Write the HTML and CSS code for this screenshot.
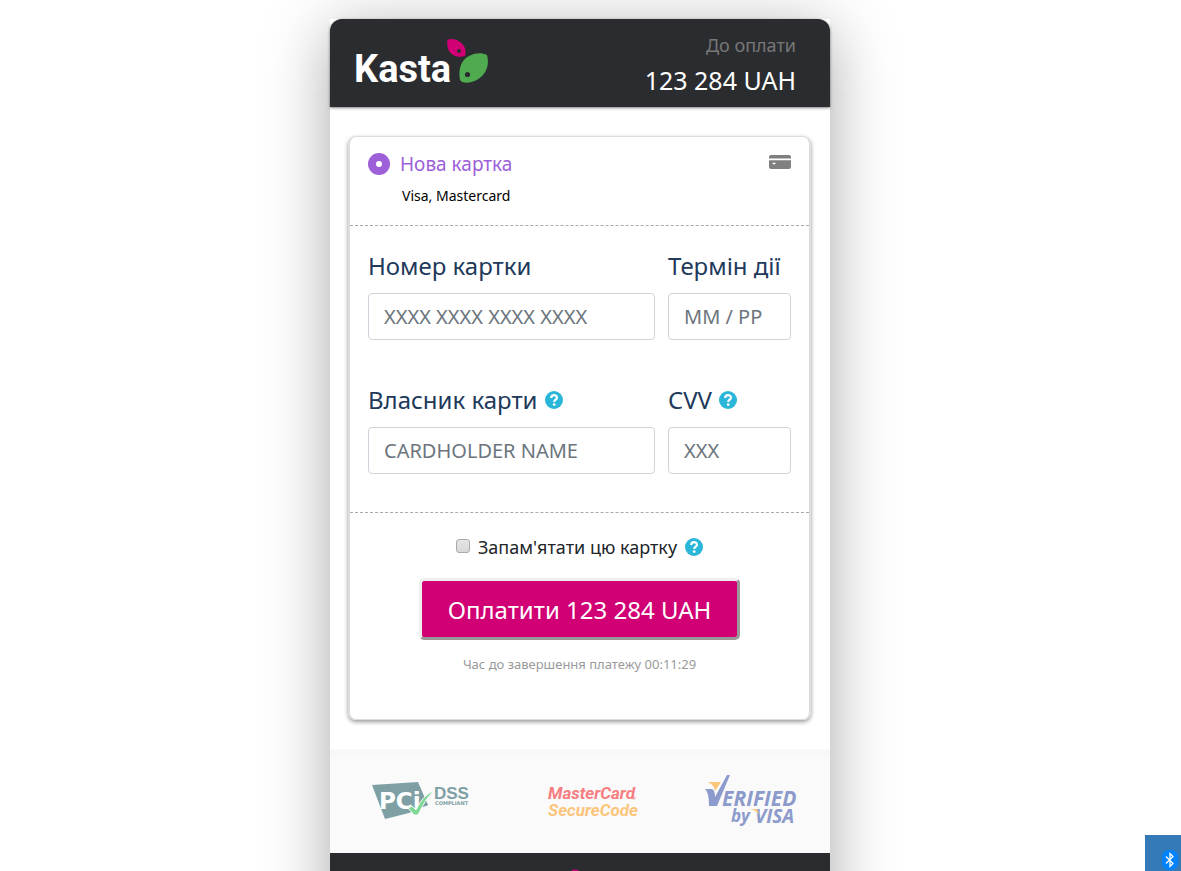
FILE: index.html
```html
<!DOCTYPE html>
<html lang="uk">
<head>
<meta charset="utf-8">
<meta name="viewport" content="width=device-width, initial-scale=1">
<title>Kasta</title>
<link rel="stylesheet" href="styles.css">
</head>
<body>
<main class="checkout">
  <header class="topbar">
    <svg class="logo" viewBox="0 0 134 46" width="134" height="46" role="img" aria-label="Kasta">
      <text class="logo-text" x="-2" y="44">Kasta</text>
      <path fill="#d10074" d="M91.500 1.500C98-.500 106 3 109 10C110 13 109.500 16 109 18C103 20 96 18 93 13C91 9 91 4 91.500 1.500Z"/>
      <circle cx="103" cy="13" r="2" fill="#2b2c30"/>
      <path fill="#50ab50" d="M104 42C102 31 105 22 113 18C118 15 125 14 131 17C133 24 132 32 126 38C120 44 112 46 106 44Z"/>
      <circle cx="111.500" cy="36.500" r="2.600" fill="#2b2c30"/>
    </svg>
    <div class="due">
      <span class="due-label">До оплати</span>
      <span class="due-sum">123 284 UAH</span>
    </div>
  </header>

  <form class="card">
    <div class="method">
      <label class="method-choice"><input class="radio" type="radio" name="method" checked><span>Нова картка</span></label>
      <svg class="card-icon" viewBox="0 0 22 14" width="22" height="14" aria-hidden="true">
        <rect width="22" height="14" rx="2" fill="#808080"/><path fill="#fff" d="M0 3.500h22v1.700H0zM3 8.500l2-1 2 1-2 1z"/>
      </svg>
      <p class="brands">Visa, Mastercard</p>
    </div>

    <div class="fields">
      <div class="field">
        <label class="label" for="number">Номер картки</label>
        <input class="input" id="number" type="text" placeholder="XXXX XXXX XXXX XXXX">
      </div>
      <div class="field">
        <label class="label" for="expiry">Термін дії</label>
        <input class="input" id="expiry" type="text" placeholder="MM / РР">
      </div>
      <div class="field">
        <div class="label-row"><label class="label" for="holder">Власник карти</label>
          <svg class="help" viewBox="0 0 18 18" width="18" height="18"><use href="#help"/></svg></div>
        <input class="input" id="holder" type="text" placeholder="CARDHOLDER NAME">
      </div>
      <div class="field">
        <div class="label-row"><label class="label" for="cvv">CVV</label>
          <svg class="help" viewBox="0 0 18 18" width="18" height="18"><use href="#help"/></svg></div>
        <input class="input" id="cvv" type="text" placeholder="XXX">
      </div>
    </div>

    <div class="submit">
      <div class="remember">
        <input class="check" id="remember" type="checkbox"><label for="remember">Запам'ятати цю картку</label>
        <svg class="help" viewBox="0 0 18 18" width="18" height="18">
          <g id="help"><circle cx="9" cy="9" r="9" fill="#29b6d8"/><path d="M6.200 7C6.200 3.200 12 3.300 12 6.700C12 8.800 9.200 8.700 9.200 11" fill="none" stroke="#fff" stroke-width="2.200"/><circle cx="9.200" cy="13.600" r="1.400" fill="#fff"/></g>
        </svg>
      </div>
      <button class="pay" type="button">Оплатити 123 284 UAH</button>
      <p class="timer">Час до завершення платежу 00:11:29</p>
    </div>
  </form>

  <section class="badges">
    <svg viewBox="0 0 98 38" width="98" height="38" role="img" aria-label="PCI DSS Compliant">
      <path fill="#7ea0a4" d="M0 3L46 0L56 23L37 31L13 37Z"/>
      <text class="pci" x="7" y="27">PCi</text>
      <path fill="#7ea0a4" d="M53 23l3-1-1 2z"/>
      <path fill="#7fd894" stroke="#fafafa" stroke-width="1" d="M36 26L40 24L44 28C48 20 53 12 62 9C55 15 51 23 46 33H42Z"/>
      <text class="dss" x="62" y="17">DSS</text>
      <text class="compliant" x="63" y="23">COMPLIANT</text>
    </svg>
    <svg class="securecode" viewBox="0 0 88 36" width="88" height="36" role="img" aria-label="MasterCard SecureCode">
      <text class="mc mc-red" x="0" y="16">MasterCard</text>
      <text class="mc mc-gold" x="0" y="33">SecureCode</text>
      <circle cx="86" cy="15" r="1.300" fill="none" stroke="#f77d81" stroke-width=".6"/>
      <path fill="none" stroke="#fcc57c" stroke-width="1" d="M86 32.500h2"/>
    </svg>
    <svg class="verified" viewBox="0 0 92 52" width="92" height="52" role="img" aria-label="Verified by Visa">
      <path fill="#fcc57c" d="M2 7H16L10 16Q9 9 2 7Z"/>
      <path fill="#8c9bcc" d="M0 14H7Q10 15 10 22L22 0H25L12 31H4Q4 17 0 14Z"/>
      <text class="vbv" x="17" y="31">ERIFIED</text>
      <text class="vbv-by" x="26" y="47">by</text>
      <text class="visa" x="50" y="48">VISA</text>
      <path fill="#fcc57c" d="M45 34H52L55 40Q51 35 45 34Z"/>
    </svg>
  </section>

  <footer class="bottom">
    <svg viewBox="0 0 24 24" width="24" height="24" aria-hidden="true">
      <path fill="#d10074" d="M4 1C9-1 14 2 15 8Q14 11 11 11Q2 10 4 1Z"/><path fill="#50ab50" d="M12 22Q9 9 23 10Q24 21 12 22Z"/>
    </svg>
  </footer>
</main>
<aside class="tray">
  <svg viewBox="0 0 16 20" width="16" height="20" aria-hidden="true">
    <rect width="16" height="20" rx="7" fill="#0082fc"/><path fill="none" stroke="#fff" stroke-width="1.300" d="M4 6.500L11 13.500L8 16.500V3.500L11 6.500L4 13.500"/>
  </svg>
</aside>
</body>
</html>
```
FILE: styles.css
```css
* { box-sizing: border-box; }
body {
  margin: 0;
  padding: 19px 21px 0 0;
  height: 100vh;
  overflow: hidden;
  background: #fff;
  color: #212529;
  font-family: "Noto Sans", "Open Sans", sans-serif;
}
p { margin: 0; }
svg { flex: none; }
.checkout {
  max-width: 500px;
  margin: 0 auto;
  background: #fff;
  box-shadow: 0 12px 60px rgba(0, 0, 0, .34);
}
.topbar {
  display: flex;
  justify-content: space-between;
  padding: 13px 34px 5px 26px;
  background: #2b2c30;
  border-radius: 12px 12px 0 0;
  box-shadow: 0 1px 3px rgba(0, 0, 0, .5);
}
.logo { margin-top: 6px; overflow: visible; }
.logo-text { font: 700 38px Roboto, sans-serif; fill: #fff; }
.due { display: flex; flex-direction: column; text-align: right; }
.due-label { font-size: 18px; line-height: 26px; color: #777; }
.due-sum { font-size: 25px; line-height: 44px; color: #fff; }

.card {
  margin: 29px 19px 29px 18px;
  border: solid #ddd;
  border-width: 1px 2px;
  border-radius: 8px;
  box-shadow: 0 2px 4px rgba(0, 0, 0, .4);
}
.method {
  display: flex;
  flex-wrap: wrap;
  justify-content: space-between;
  align-items: center;
  padding: 12px 18px 14px;
  border-bottom: 1px dashed #aaa;
}
.method-choice {
  display: flex;
  align-items: center;
  gap: 10px;
  font-size: 19px;
  line-height: 30px;
  color: #9d60d8;
}
.radio {
  appearance: none;
  width: 22px;
  height: 22px;
  margin: 0;
  border: 8px solid #9d60d8;
  border-radius: 50%;
  background: #fff;
}
.card-icon { margin-bottom: 4px; }
.brands { width: 100%; padding: 2px 0 0 34px; font-size: 14px; line-height: 30px; color: #000; }

.fields {
  display: grid;
  grid-template-columns: 7fr 3fr;
  gap: 38px 13px;
  padding: 18px 18px 38px;
  border-bottom: 1px dashed #aaa;
}
.label-row { display: flex; align-items: center; gap: 7px; }
.label { display: block; font-size: 24px; line-height: 44px; color: #21395b; }
.field { min-width: 0; }
.input {
  display: block;
  width: 100%;
  height: 47px;
  margin-top: 5px;
  padding: 0 15px;
  border: 1px solid #ced4da;
  border-radius: 4px;
  background: #fff;
  font: 20px "Noto Sans", sans-serif;
}
.input::placeholder { color: #6c757d; opacity: 1; }

.submit { display: flex; flex-direction: column; align-items: center; padding: 21px 18px 45px; }
.remember { display: flex; align-items: center; gap: 8px; font-size: 18px; line-height: 26px; }
.check {
  appearance: none;
  width: 14px;
  height: 14px;
  margin: 0 0 3px;
  border: 1px solid #aaa;
  border-radius: 3px;
  background: linear-gradient(#e6e6e6, #d8d8d8);
}
.pay {
  margin-top: 18px;
  padding: 2px 26px 0;
  border: 3px solid;
  border-color: #efefef #999 #999 #efefef;
  border-radius: 5px;
  background: #d10074;
  color: #fff;
  font: 24px/54px "Noto Sans", sans-serif;
}
.timer { margin-top: 14px; font-size: 13px; line-height: 20px; color: #999; }

.badges {
  display: flex;
  align-items: center;
  justify-content: space-between;
  min-height: 104px;
  padding: 0 33px 8px 42px;
  background: #fafafa;
  border-top: 8px solid #f8f8f8;
}
.securecode { margin-left: 9px; }
.securecode, .verified { overflow: visible; }
.pci { font: 900 23px "DejaVu Sans", sans-serif; fill: #fff; }
.dss { font: 900 17px "Liberation Sans", sans-serif; fill: #7ea0a4; }
.compliant { font: 700 5px "DejaVu Sans", sans-serif; fill: #7ea0a4; }
.mc { font: italic 700 17px Roboto, sans-serif; }
.mc-red { fill: #f77d81; }
.mc-gold { fill: #fcc57c; }
.vbv { font: italic 700 21px "Open Sans", sans-serif; fill: #8c9bcc; }
.vbv-by { font: italic 700 17px "Open Sans", sans-serif; fill: #8c9bcc; }
.visa { font: italic 700 19px "Open Sans", sans-serif; fill: #8c9bcc; }

.bottom {
  display: flex;
  justify-content: center;
  padding: 16px 0 40px;
  background: #2b2c30;
}
.tray {
  position: fixed;
  right: 0;
  bottom: 0;
  display: flex;
  align-items: flex-end;
  justify-content: flex-end;
  width: 36px;
  height: 36px;
  padding: 0 3px 1px 0;
  background: #337ab7;
}
```
